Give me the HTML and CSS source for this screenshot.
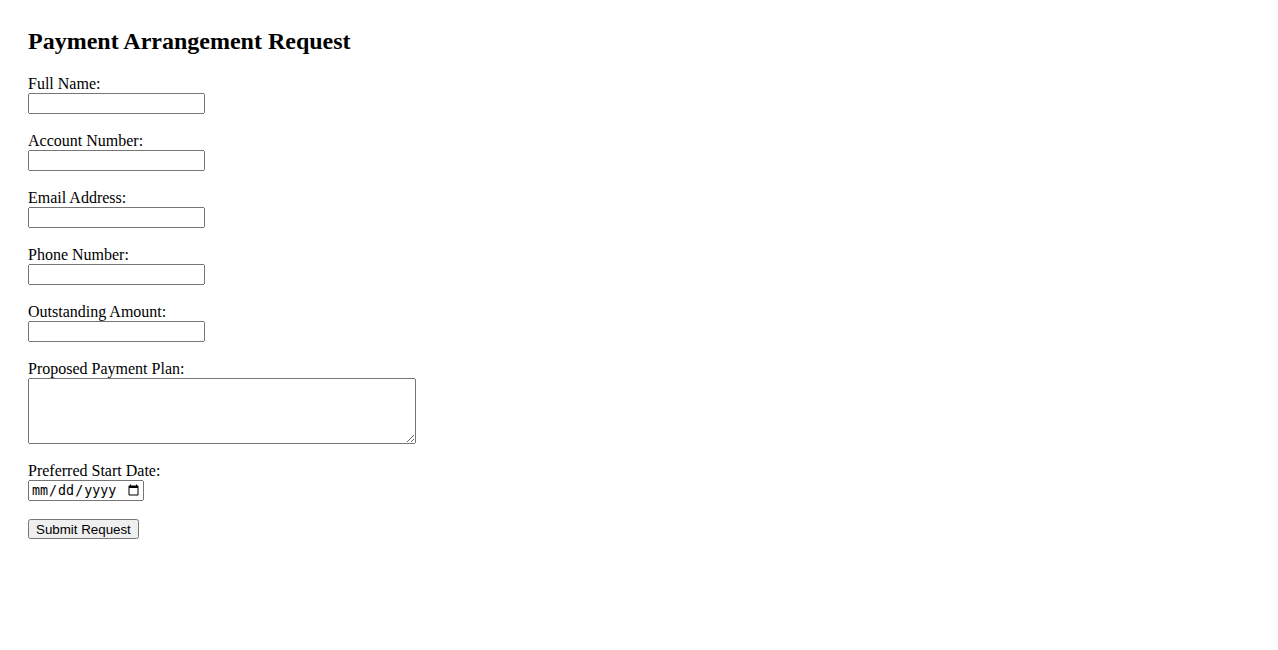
FILE: index.html
```html
<!DOCTYPE html>
<html>
<head>
<meta charset="utf-8">
<title>Payment Arrangement Request</title>
<link rel="stylesheet" href="styles.css">
</head>
<body>
<div class="page">
<h2 class="title">Payment Arrangement Request</h2>
<form class="form">
  <div class="field">
    <label for="name">Full Name:</label>
    <input type="text" id="name" class="text">
  </div>
  <div class="field">
    <label for="account">Account Number:</label>
    <input type="text" id="account" class="text">
  </div>
  <div class="field">
    <label for="email">Email Address:</label>
    <input type="email" id="email" class="text">
  </div>
  <div class="field">
    <label for="phone">Phone Number:</label>
    <input type="tel" id="phone" class="text">
  </div>
  <div class="field">
    <label for="amount">Outstanding Amount:</label>
    <input type="text" id="amount" class="text">
  </div>
  <div class="field">
    <label for="plan">Proposed Payment Plan:</label>
    <textarea id="plan" class="plan"></textarea>
  </div>
  <div class="field">
    <label for="start">Preferred Start Date:</label>
    <input type="date" id="start" class="date">
  </div>
  <div class="field">
    <button type="submit" class="submit">Submit Request</button>
  </div>
</form>
</div>
</body>
</html>
```
FILE: styles.css
```css
body {
  margin: 0;
  font-family: "Liberation Serif", "Times New Roman", serif;
  font-size: 16px;
  color: #000;
  background: #fff;
}
.page {
  padding: 28px;
}
.title {
  margin: 0 0 20px;
  font-size: 24px;
  font-weight: bold;
}
.form {
  margin: 0;
}
.field {
  margin-bottom: 18px;
}
.field label {
  display: block;
  line-height: 18px;
}
.text {
  box-sizing: border-box;
  width: 177px;
  height: 21px;
}
.plan {
  width: 382px;
  height: 60px;
  margin: 0;
  vertical-align: bottom;
}
.date {
  box-sizing: border-box;
  width: 116px;
  height: 21px;
}
.submit {
  height: 20px;
}
```
